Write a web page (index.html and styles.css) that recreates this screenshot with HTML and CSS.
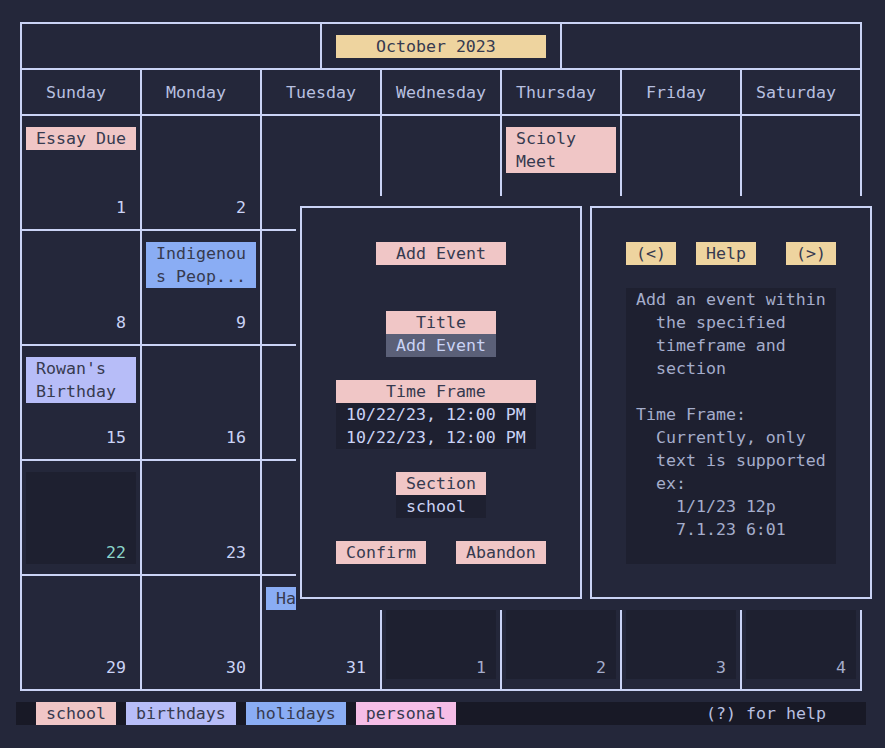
FILE: index.html
```html
<!DOCTYPE html>
<html>
<head>
<meta charset="utf-8">
<link rel="stylesheet" href="styles.css">
</head>
<body>
<div class="term">
  <div class="cal-wrap">
    <div class="cal">
      <div class="title-row">
        <div class="cell"></div>
        <div class="cell title-cell"><span class="month">    October 2023     </span></div>
        <div class="cell"></div>
      </div>
      <div class="grid">
        <div class="cell dname">  Sunday</div>
        <div class="cell dname">  Monday</div>
        <div class="cell dname">  Tuesday</div>
        <div class="cell dname"> Wednesday</div>
        <div class="cell dname"> Thursday</div>
        <div class="cell dname">  Friday</div>
        <div class="cell dname"> Saturday</div>

        <div class="cell day"><div class="day-in"><div class="ev school">Essay Due</div><div class="num">1</div></div></div>
        <div class="cell day"><div class="day-in"><div class="num">2</div></div></div>
        <div class="cell day"><div class="day-in"></div></div>
        <div class="cell day"><div class="day-in"></div></div>
        <div class="cell day"><div class="day-in"><div class="ev school">Scioly Meet</div></div></div>
        <div class="cell day"><div class="day-in"></div></div>
        <div class="cell day"><div class="day-in"></div></div>

        <div class="cell day"><div class="day-in"><div class="num">8</div></div></div>
        <div class="cell day"><div class="day-in"><div class="ev holidays">Indigenous Peop...</div><div class="num">9</div></div></div>
        <div class="cell day"><div class="day-in"></div></div>
        <div class="cell day"><div class="day-in"></div></div>
        <div class="cell day"><div class="day-in"></div></div>
        <div class="cell day"><div class="day-in"></div></div>
        <div class="cell day"><div class="day-in"></div></div>

        <div class="cell day"><div class="day-in"><div class="ev birthdays">Rowan's Birthday</div><div class="num">15</div></div></div>
        <div class="cell day"><div class="day-in"><div class="num">16</div></div></div>
        <div class="cell day"><div class="day-in"></div></div>
        <div class="cell day"><div class="day-in"></div></div>
        <div class="cell day"><div class="day-in"></div></div>
        <div class="cell day"><div class="day-in"></div></div>
        <div class="cell day"><div class="day-in"></div></div>

        <div class="cell day"><div class="day-in today"><div class="num">22</div></div></div>
        <div class="cell day"><div class="day-in"><div class="num">23</div></div></div>
        <div class="cell day"><div class="day-in"></div></div>
        <div class="cell day"><div class="day-in"></div></div>
        <div class="cell day"><div class="day-in"></div></div>
        <div class="cell day"><div class="day-in"></div></div>
        <div class="cell day"><div class="day-in"></div></div>

        <div class="cell day"><div class="day-in"><div class="num">29</div></div></div>
        <div class="cell day"><div class="day-in"><div class="num">30</div></div></div>
        <div class="cell day"><div class="day-in"><div class="ev holidays clip">Ha</div><div class="num">31</div></div></div>
        <div class="cell day"><div class="day-in other"><div class="num">1</div></div></div>
        <div class="cell day"><div class="day-in other"><div class="num">2</div></div></div>
        <div class="cell day"><div class="day-in other"><div class="num">3</div></div></div>
        <div class="cell day"><div class="day-in other"><div class="num">4</div></div></div>
      </div>
    </div>
  </div>

  <div class="footer">
    <span class="tag school"> school </span>
    <span class="tag birthdays"> birthdays </span>
    <span class="tag holidays"> holidays </span>
    <span class="tag personal"> personal </span>
    <span class="hint">(?) for help</span>
  </div>

  <div class="popup left">
    <div class="frame">
      <div class="prow mt1"><span class="tag school ml70">  Add Event  </span></div>
      <div class="prow mt2"><span class="tag school ml80">   Title   </span></div>
      <div class="prow"><span class="field active ml80"> Add Event </span></div>
      <div class="prow mt1"><span class="tag school ml30">     Time Frame     </span></div>
      <div class="prow"><span class="field ml30"> 10/22/23, 12:00 PM </span></div>
      <div class="prow"><span class="field ml30"> 10/22/23, 12:00 PM </span></div>
      <div class="prow mt1"><span class="tag school ml90"> Section </span></div>
      <div class="prow"><span class="field ml90"> school  </span></div>
      <div class="prow mt1"><span class="tag school ml30"> Confirm </span><span class="tag school ml30"> Abandon </span></div>
    </div>
  </div>

  <div class="popup right">
    <div class="frame">
      <div class="prow mt1"><span class="tag month ml30"> (&lt;) </span><span class="tag month ml20"> Help </span><span class="tag month ml30"> (&gt;) </span></div>
      <div class="help mt1"> Add an event within
   the specified
   timeframe and
   section

 Time Frame:
   Currently, only
   text is supported
   ex:
     1/1/23 12p
     7.1.23 6:01</div>
    </div>
  </div>
</div>
</body>
</html>
```

FILE: styles.css
```css
html, body {
  margin: 0;
  padding: 0;
  background: #24273a;
  overflow: hidden;
}

body {
  font-family: "DejaVu Sans Mono", "Liberation Mono", monospace;
  font-size: 16.6px;
  line-height: 23px;
  color: #cad3f5;
}

.term {
  position: relative;
  margin: 12px 0 0 16px;
  width: 860px;
  height: 736px;
}

.cal-wrap {
  padding: 10px 4px 11px;
  width: 850px;
  box-sizing: border-box;
}

.cal {
  width: 842px;
  box-sizing: border-box;
  background: #cad3f5;
  padding: 2px;
  display: flex;
  flex-direction: column;
  gap: 2px;
}

.title-row {
  display: grid;
  grid-template-columns: 298px 238px 298px;
  gap: 2px;
  height: 44px;
}

.grid {
  display: grid;
  grid-template-columns: repeat(7, 118px);
  grid-template-rows: 44px repeat(5, 113px);
  gap: 2px;
}

.cell {
  background: #24273a;
}

.title-cell {
  padding: 11px 0 0 14px;
}

.month {
  display: inline-block;
  white-space: pre;
  background: #eed49f;
  color: #363a4f;
  height: 23px;
}

.dname {
  white-space: pre;
  padding: 11px 0 0 4px;
  color: #b8c0e0;
}

.day {
  padding: 11px 4px 10px;
}

.day-in {
  height: 92px;
  display: flex;
  flex-direction: column;
}

.day-in.today,
.day-in.other {
  background: #1e2030;
}

.ev {
  padding: 0 10px;
  color: #363a4f;
  overflow-wrap: anywhere;
}

.school { background: #f0c6c6; color: #363a4f; }
.birthdays { background: #b7bdf8; color: #363a4f; }
.holidays { background: #8aadf4; color: #363a4f; }
.personal { background: #f5bde6; color: #363a4f; }

.num {
  margin-top: auto;
  text-align: right;
  padding-right: 10px;
  color: #cad3f5;
}

.today .num { color: #8bd5ca; }
.other .num { color: #a5adcb; }

.footer {
  display: flex;
  gap: 10px;
  width: 850px;
  height: 23px;
  box-sizing: border-box;
  padding: 0 40px 0 20px;
  background: #181926;
}

.tag {
  white-space: pre;
  height: 23px;
  display: inline-block;
}

.hint {
  margin-left: auto;
  white-space: pre;
  color: #b8c0e0;
}

.popup {
  position: absolute;
  top: 184px;
  width: 290px;
  height: 414px;
  background: #24273a;
}

.popup.left { left: 280px; }
.popup.right { left: 570px; }

.frame {
  margin: 10px 4px 0;
  height: 393px;
  box-sizing: border-box;
  border: 2px solid #cad3f5;
  padding: 11px 4px 10px;
  display: flex;
  flex-direction: column;
}

.prow {
  display: flex;
  height: 23px;
}

.mt1 { margin-top: 23px; }
.mt2 { margin-top: 46px; }
.ml20 { margin-left: 20px; }
.ml30 { margin-left: 30px; }
.ml70 { margin-left: 70px; }
.ml80 { margin-left: 80px; }
.ml90 { margin-left: 90px; }

.field {
  white-space: pre;
  background: #1e2030;
  color: #cad3f5;
  height: 23px;
}

.field.active {
  background: #5b6078;
}

.help {
  white-space: pre;
  margin-left: 30px;
  width: 210px;
  height: 276px;
  background: #1e2030;
  color: #a5adcb;
}
```
